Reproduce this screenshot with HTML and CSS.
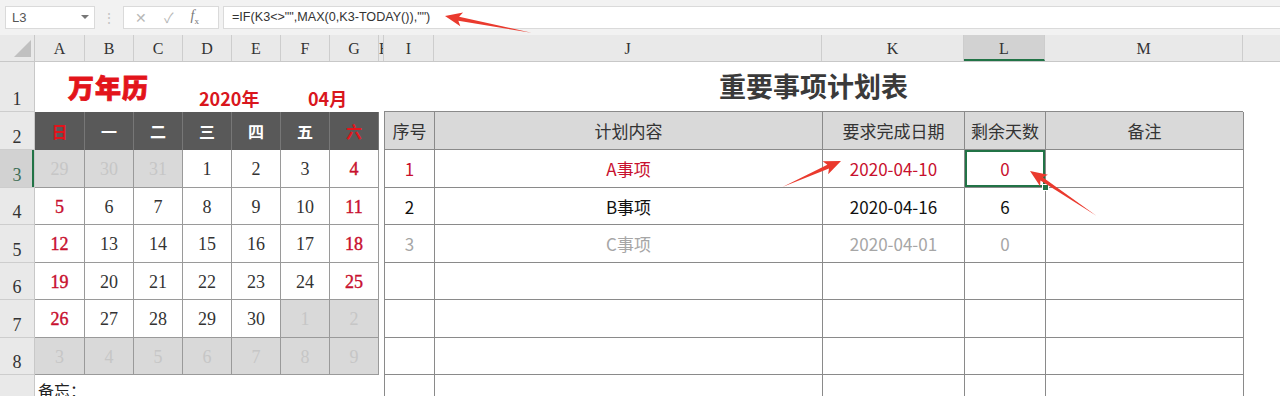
FILE: index.html
```html
<!DOCTYPE html>
<html lang="zh-CN">
<head>
  <meta charset="UTF-8">
  <title>万年历 - 重要事项计划表</title>
  <link rel="stylesheet" href="styles.css">
</head>
<body>
  <div class="toolbar">
    <div class="namebox"><span>L3</span><span class="caret"></span></div>
    <div class="grip">⋮</div>
    <div class="fnbox">
      <span class="fn-btn">✕</span>
      <span class="fn-btn">✓</span>
      <span class="fn-fx"><i>f</i><sub>x</sub></span>
    </div>
    <div class="formula">=IF(K3&lt;&gt;"",MAX(0,K3-TODAY()),"")</div>
  </div>

  <div class="sheet">
    <div class="corner"><span class="corner-tri"></span></div>

    <div class="colheads">
      <div class="ch w50">A</div>
      <div class="ch w49">B</div>
      <div class="ch w49">C</div>
      <div class="ch w49">D</div>
      <div class="ch w49">E</div>
      <div class="ch w49">F</div>
      <div class="ch w49">G</div>
      <div class="ch w5">H</div>
      <div class="ch w50">I</div>
      <div class="ch w388">J</div>
      <div class="ch w142">K</div>
      <div class="ch w81 active">L</div>
      <div class="ch w198">M</div>
      <div class="ch rest"></div>
    </div>

    <div class="rowheads">
      <div class="rh r50">1</div>
      <div class="rh r38">2</div>
      <div class="rh r38 active">3</div>
      <div class="rh r37">4</div>
      <div class="rh r38">5</div>
      <div class="rh r37">6</div>
      <div class="rh r38">7</div>
      <div class="rh r37">8</div>
      <div class="rh r21"></div>
    </div>

    <div class="cells">
      <section class="calendar">
        <div class="cal-title">
          <span class="brand">万年历</span>
          <span class="ym year">2020年</span>
          <span class="ym">04月</span>
        </div>
        <div class="cal-grid">
          <div class="wd red">日</div>
          <div class="wd">一</div>
          <div class="wd">二</div>
          <div class="wd">三</div>
          <div class="wd">四</div>
          <div class="wd">五</div>
          <div class="wd red">六</div>

          <div class="day off">29</div>
          <div class="day off">30</div>
          <div class="day off">31</div>
          <div class="day">1</div>
          <div class="day">2</div>
          <div class="day">3</div>
          <div class="day red">4</div>

          <div class="day red">5</div>
          <div class="day">6</div>
          <div class="day">7</div>
          <div class="day">8</div>
          <div class="day">9</div>
          <div class="day">10</div>
          <div class="day red">11</div>

          <div class="day red">12</div>
          <div class="day">13</div>
          <div class="day">14</div>
          <div class="day">15</div>
          <div class="day">16</div>
          <div class="day">17</div>
          <div class="day red">18</div>

          <div class="day red">19</div>
          <div class="day">20</div>
          <div class="day">21</div>
          <div class="day">22</div>
          <div class="day">23</div>
          <div class="day">24</div>
          <div class="day red">25</div>

          <div class="day red">26</div>
          <div class="day">27</div>
          <div class="day">28</div>
          <div class="day">29</div>
          <div class="day">30</div>
          <div class="day off">1</div>
          <div class="day off">2</div>

          <div class="day off">3</div>
          <div class="day off">4</div>
          <div class="day off">5</div>
          <div class="day off">6</div>
          <div class="day off">7</div>
          <div class="day off">8</div>
          <div class="day off">9</div>
        </div>
        <div class="memo">备忘：</div>
      </section>

      <div class="spacer"></div>

      <section class="plan">
        <h2 class="plan-title">重要事项计划表</h2>
        <div class="plan-grid">
          <div class="ph">序号</div>
          <div class="ph">计划内容</div>
          <div class="ph">要求完成日期</div>
          <div class="ph">剩余天数</div>
          <div class="ph">备注</div>

          <div class="pc urgent">1</div>
          <div class="pc urgent">A事项</div>
          <div class="pc urgent">2020-04-10</div>
          <div class="pc urgent selected">0</div>
          <div class="pc"></div>

          <div class="pc">2</div>
          <div class="pc">B事项</div>
          <div class="pc">2020-04-16</div>
          <div class="pc">6</div>
          <div class="pc"></div>

          <div class="pc done">3</div>
          <div class="pc done">C事项</div>
          <div class="pc done">2020-04-01</div>
          <div class="pc done">0</div>
          <div class="pc"></div>

          <div class="pc"></div><div class="pc"></div><div class="pc"></div><div class="pc"></div><div class="pc"></div>
          <div class="pc"></div><div class="pc"></div><div class="pc"></div><div class="pc"></div><div class="pc"></div>
          <div class="pc"></div><div class="pc"></div><div class="pc"></div><div class="pc"></div><div class="pc"></div>
          <div class="pc"></div><div class="pc"></div><div class="pc"></div><div class="pc"></div><div class="pc"></div>
        </div>
      </section>
    </div>
  </div>

  <!-- red pointer arrows drawn on top of the sheet -->
  <svg class="arrows" width="1280" height="396" viewBox="0 0 1280 396">
    <g transform="translate(445 16) rotate(191.3)">
      <polygon points="0,0 -17,-7 -14,-2 -88,0.5 -14,2 -17,7"/>
    </g>
    <g transform="translate(841 161) rotate(-23.4)">
      <polygon points="0,0 -17,-7 -14,-2 -64,0.5 -14,2 -17,7"/>
    </g>
    <g transform="translate(1030 171) rotate(214.3)">
      <polygon points="0,0 -17,-7 -14,-2 -80,0.5 -14,2 -17,7"/>
    </g>
  </svg>
</body>
</html>
```

FILE: styles.css
```css
/* sheet screenshot: formula bar + calendar + plan table */

body {
  margin: 0;
  width: 1280px;
  height: 396px;
  overflow: hidden;
  position: relative;
  background: #fff;
  font-family: "Noto Sans CJK SC", "Liberation Sans", sans-serif;
  color: #333;
}

/* ---------- formula bar ---------- */

.toolbar {
  height: 35px;
  display: flex;
  align-items: center;
  background: #f2f2f2;
  box-sizing: border-box;
  padding: 0 0 1px 5px;
}

.namebox {
  width: 90px;
  height: 23px;
  box-sizing: border-box;
  background: #fff;
  border: 1px solid #dadada;
  display: flex;
  align-items: center;
  justify-content: space-between;
  padding: 0 5px 0 6px;
  font-family: "Liberation Sans", sans-serif;
  font-size: 13px;
  color: #555;
}

.caret {
  width: 0;
  height: 0;
  border-left: 4px solid transparent;
  border-right: 4px solid transparent;
  border-top: 4px solid #777;
}

.grip {
  width: 28px;
  text-align: center;
  color: #c4c4c4;
  font-size: 14px;
}

.fnbox {
  width: 96px;
  height: 23px;
  box-sizing: border-box;
  background: #fff;
  border: 1px solid #dadada;
  display: flex;
  align-items: center;
  padding-left: 11px;
  gap: 17px;
  color: #b8b8b8;
  font-size: 14px;
}

.fn-fx {
  font-family: "Liberation Serif", serif;
  color: #777;
  font-size: 14px;
}

.fn-fx sub {
  font-size: 9px;
}

.formula {
  flex: 1;
  height: 23px;
  margin-left: 4px;
  box-sizing: border-box;
  background: #fff;
  border-top: 1px solid #dadada;
  border-bottom: 1px solid #dadada;
  border-left: 1px solid #dadada;
  padding-left: 8px;
  font-family: "Liberation Sans", sans-serif;
  font-size: 12.6px;
  line-height: 21px;
  color: #333;
}

/* ---------- sheet frame ---------- */

.sheet {
  display: grid;
  grid-template-columns: 35px 1fr;
  grid-template-rows: 27px 1fr;
}

.corner {
  background: #e9e9e9;
  border-right: 1px solid #c8c8c8;
  border-bottom: 1px solid #c8c8c8;
  box-sizing: border-box;
  position: relative;
}

.corner-tri {
  position: absolute;
  right: 3px;
  bottom: 4px;
  width: 0;
  height: 0;
  border-left: 17px solid transparent;
  border-bottom: 17px solid #c0c0c0;
}

.colheads {
  display: flex;
  background: #e9e9e9;
  border-bottom: 1px solid #c8c8c8;
  overflow: hidden;
}

.ch {
  flex: none;
  box-sizing: border-box;
  border-right: 1px solid #cdcdcd;
  text-align: center;
  font-family: "Liberation Serif", serif;
  font-size: 16px;
  line-height: 27px;
  color: #333;
  overflow: hidden;
}

.ch.active {
  background: #d2d2d2;
  border-bottom: 2px solid #217346;
}

.ch.rest {
  flex: 1;
  border-right: none;
}

.w5 { width: 5px; }
.w49 { width: 49px; }
.w50 { width: 50px; }
.w81 { width: 81px; }
.w142 { width: 142px; }
.w198 { width: 198px; }
.w388 { width: 388px; }

.rowheads {
  background: #e9e9e9;
  border-right: 1px solid #c8c8c8;
}

.rh {
  box-sizing: border-box;
  border-bottom: 1px solid #cdcdcd;
  display: flex;
  align-items: flex-end;
  justify-content: center;
  padding-bottom: 1px;
  font-family: "Liberation Serif", serif;
  font-size: 18px;
  color: #333;
}

.rh.active {
  background: #d2d2d2;
  color: #3d6e55;
  box-shadow: inset -2px 0 0 #217346;
}

.r21 { height: 21px; border-bottom: none; }
.r37 { height: 37px; }
.r38 { height: 38px; }
.r50 { height: 50px; }

.cells {
  display: flex;
  align-items: flex-start;
  height: 334px;
  overflow: hidden;
}

.spacer {
  width: 5px;
  flex: none;
}

/* ---------- calendar ---------- */

.calendar {
  width: 344px;
  flex: none;
}

.cal-title {
  height: 50px;
  display: flex;
  align-items: flex-end;
  padding-left: 33px;
  color: #e3141b;
  font-weight: 900;
}

.brand {
  width: 131px;
  font-size: 26px;
  line-height: 1;
  padding-bottom: 12px;
  letter-spacing: 1px;
  -webkit-text-stroke: 0.8px #e3141b;
}

.ym {
  font-size: 18px;
  font-weight: 700;
  line-height: 1;
  padding-bottom: 5px;
  color: #d9161d;
}

.year {
  width: 109px;
}

.cal-grid {
  display: grid;
  grid-template-columns: 50px repeat(6, 49px);
  grid-template-rows: 38px 38px 37px 38px 37px 38px 37px;
}

.wd {
  background: #595959;
  color: #fff;
  font-weight: 700;
  font-size: 16px;
  display: flex;
  align-items: center;
  justify-content: center;
  border-right: 1px solid #777;
  box-sizing: border-box;
}

.wd.red {
  color: #e3141b;
}

.day {
  box-sizing: border-box;
  border-right: 1px solid #9a9a9a;
  border-bottom: 1px solid #9a9a9a;
  display: flex;
  align-items: center;
  justify-content: center;
  padding-top: 2px;
  font-family: "Liberation Serif", serif;
  font-size: 18px;
  color: #333;
}

.day.red {
  color: #c8102e;
  -webkit-text-stroke: 0.4px #c8102e;
}

.day.off {
  background: #d9d9d9;
  color: #c6c6c6;
}

.memo {
  padding: 4px 0 0 3px;
  font-size: 16px;
  line-height: 22px;
  color: #222;
}

/* ---------- plan table ---------- */

.plan {
  width: 859px;
  flex: none;
}

.plan-title {
  margin: 0;
  height: 50px;
  box-sizing: border-box;
  padding-top: 10px;
  text-align: center;
  font-size: 27px;
  font-weight: 700;
  line-height: 1;
  color: #3a3a3a;
}

.plan-grid {
  display: grid;
  grid-template-columns: 50px 388px 142px 81px 198px;
  grid-template-rows: 38px 38px 37px 38px 37px 38px 37px 38px;
  border-left: 1px solid #8a8a8a;
  border-top: 1px solid #8a8a8a;
  margin-top: -1px;
}

.ph,
.pc {
  box-sizing: border-box;
  border-right: 1px solid #8a8a8a;
  border-bottom: 1px solid #8a8a8a;
  display: flex;
  align-items: center;
  justify-content: center;
  font-size: 17px;
}

.ph {
  background: #d9d9d9;
  color: #333;
}

.pc {
  color: #111;
}

.pc.urgent {
  color: #c8102e;
}

.pc.done {
  color: #a6a6a6;
}

.pc.selected {
  position: relative;
  box-shadow: inset 0 0 0 2px #217346;
}

.pc.selected::after {
  content: "";
  position: absolute;
  right: -4px;
  bottom: -4px;
  width: 5px;
  height: 5px;
  background: #217346;
  border: 1px solid #fff;
}

/* ---------- overlay arrows ---------- */

.arrows {
  position: absolute;
  left: 0;
  top: 0;
  pointer-events: none;
}

.arrows polygon {
  fill: #ea3a2e;
}
```
